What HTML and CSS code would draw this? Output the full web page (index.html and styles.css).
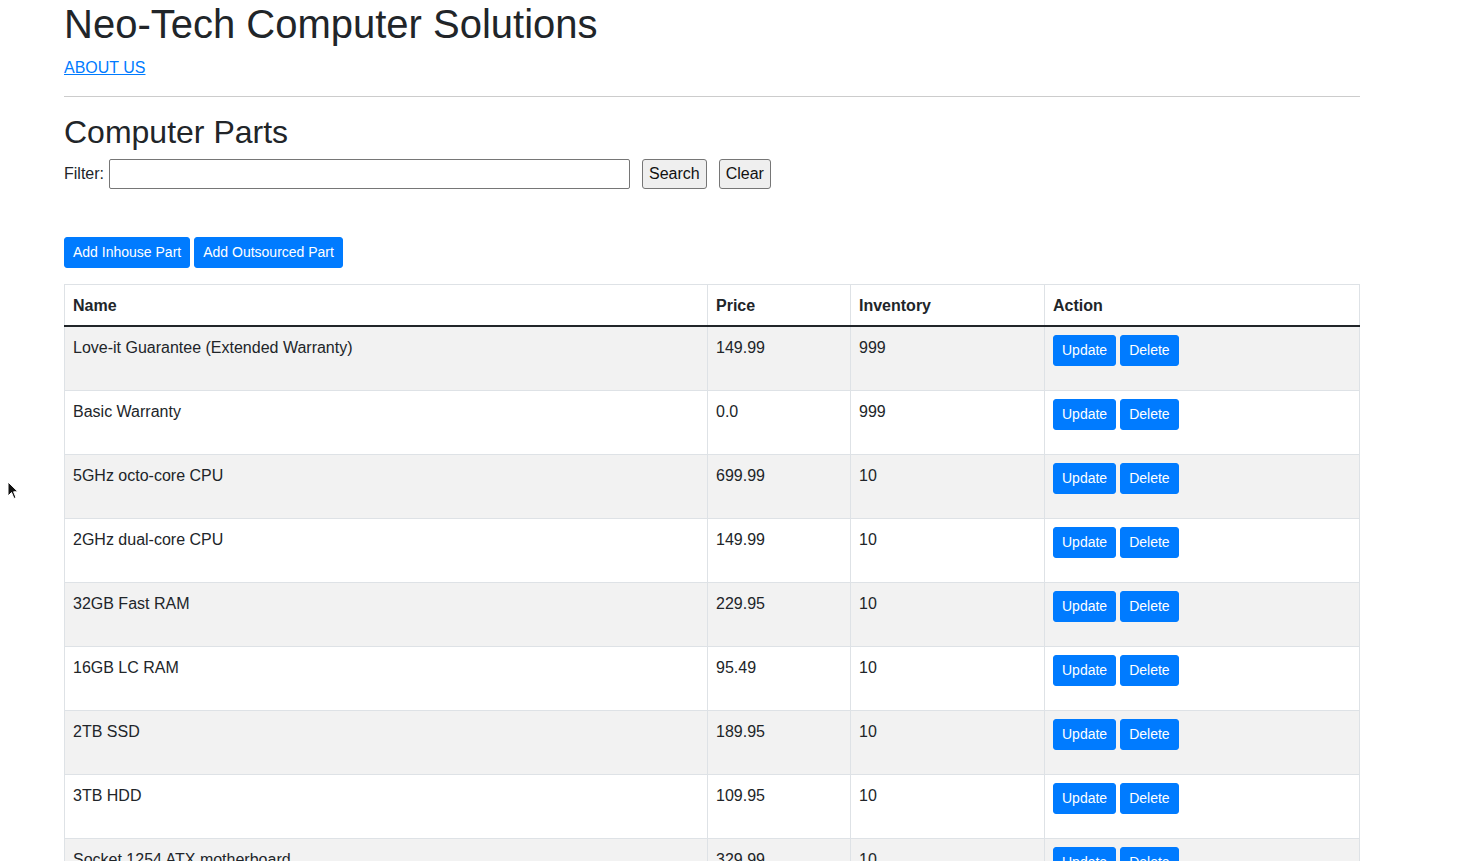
FILE: index.html
```html
<!DOCTYPE html>
<html lang="en">
<head>
<meta charset="utf-8">
<title>Neo-Tech Computer Solutions</title>
<link rel="stylesheet" href="styles.css">
</head>
<body>
<div class="page">
  <h1 class="title">Neo-Tech Computer Solutions</h1>
  <p class="nav"><a href="#">ABOUT US</a></p>
  <hr class="rule">
  <h2 class="section-title">Computer Parts</h2>
  <form class="filter">
    <label class="filter-label" for="kw">Filter:</label>
    <input class="filter-input" id="kw" type="text">
    <button class="plain-btn" type="button">Search</button>
    <button class="plain-btn" type="button">Clear</button>
  </form>
  <div class="add-bar">
    <a class="btn" href="#">Add Inhouse Part</a>
    <a class="btn" href="#">Add Outsourced Part</a>
  </div>
  <table class="parts">
    <thead>
      <tr><th class="c-name">Name</th><th class="c-price">Price</th><th class="c-inv">Inventory</th><th class="c-act">Action</th></tr>
    </thead>
    <tbody>
      <tr><td>Love-it Guarantee (Extended Warranty)</td><td>149.99</td><td>999</td><td class="act"><div class="actions"><a class="btn" href="#">Update</a><a class="btn" href="#">Delete</a></div></td></tr>
      <tr><td>Basic Warranty</td><td>0.0</td><td>999</td><td class="act"><div class="actions"><a class="btn" href="#">Update</a><a class="btn" href="#">Delete</a></div></td></tr>
      <tr><td>5GHz octo-core CPU</td><td>699.99</td><td>10</td><td class="act"><div class="actions"><a class="btn" href="#">Update</a><a class="btn" href="#">Delete</a></div></td></tr>
      <tr><td>2GHz dual-core CPU</td><td>149.99</td><td>10</td><td class="act"><div class="actions"><a class="btn" href="#">Update</a><a class="btn" href="#">Delete</a></div></td></tr>
      <tr><td>32GB Fast RAM</td><td>229.95</td><td>10</td><td class="act"><div class="actions"><a class="btn" href="#">Update</a><a class="btn" href="#">Delete</a></div></td></tr>
      <tr><td>16GB LC RAM</td><td>95.49</td><td>10</td><td class="act"><div class="actions"><a class="btn" href="#">Update</a><a class="btn" href="#">Delete</a></div></td></tr>
      <tr><td>2TB SSD</td><td>189.95</td><td>10</td><td class="act"><div class="actions"><a class="btn" href="#">Update</a><a class="btn" href="#">Delete</a></div></td></tr>
      <tr><td>3TB HDD</td><td>109.95</td><td>10</td><td class="act"><div class="actions"><a class="btn" href="#">Update</a><a class="btn" href="#">Delete</a></div></td></tr>
      <tr><td>Socket 1254 ATX motherboard</td><td>329.99</td><td>10</td><td class="act"><div class="actions"><a class="btn" href="#">Update</a><a class="btn" href="#">Delete</a></div></td></tr>
    </tbody>
  </table>
</div>
<svg class="cursor" width="12" height="20" viewBox="0 0 12 20"><path d="M1 1 L1 15 L4.5 11.5 L7 17.5 L9 16.6 L6.6 10.8 L11 10.8 Z" fill="#111" stroke="#fff" stroke-width="1"/></svg>
</body>
</html>
```
FILE: styles.css
```css
* { box-sizing: border-box; }
html, body { margin: 0; padding: 0; background: #fff; }
body {
  font-family: "Liberation Sans", Arial, sans-serif;
  font-size: 16px;
  line-height: 1.5;
  color: #212529;
}
.page { margin-left: 64px; width: 1296px; }
.title {
  margin: 0 0 8px;
  font-size: 40px;
  font-weight: 400;
  line-height: 48px;
}
.nav { margin: 0 0 16px; }
.nav a { color: #007bff; text-decoration: underline; }
.rule { margin: 0 0 16px; border: 0; border-top: 1px solid rgba(0,0,0,.2); height: 0; }
.section-title {
  margin: 0 0 8px;
  font-size: 32px;
  font-weight: 400;
  line-height: 38px;
}
.filter { display: flex; align-items: center; height: 30px; margin: 0 0 48px; }
.filter-label { margin-right: 5px; }
.filter-input {
  width: 521px; height: 30px;
  border: 1px solid #767676; border-radius: 2px;
  padding: 2px 3px; font: inherit; margin-right: 12px;
}
.plain-btn {
  height: 30px; padding: 1px 6px;
  background: #efefef; color: #111;
  border: 1px solid #767676; border-radius: 3px;
  font: inherit; margin-right: 12px;
}
.add-bar { display: flex; gap: 4px; margin-bottom: 16px; }
.btn {
  display: inline-block;
  height: 31px; padding: 4px 8px;
  font-size: 14px; line-height: 21px;
  color: #fff; background: #007bff;
  border: 1px solid #007bff; border-radius: 3px;
  text-decoration: none;
}
.parts {
  width: 1295px;
  border-collapse: collapse;
  border: 1px solid #dee2e6;
  table-layout: fixed;
}
.parts th, .parts td {
  border: 1px solid #dee2e6;
  padding: 9px 8px 7px;
  text-align: left;
  vertical-align: top;
  line-height: 24px;
}
.parts td.act { padding: 8px; }
.parts th { font-weight: 700; border-bottom: 2px solid #212529; }
.c-name { width: 643px; }
.c-price { width: 143px; }
.c-inv { width: 194px; }
.c-act { width: 315px; }
.parts tbody tr:nth-child(odd) td { background: #f2f2f2; }
.actions { display: flex; gap: 4px; height: 47px; }
.cursor { position: absolute; left: 7px; top: 481px; }
```
